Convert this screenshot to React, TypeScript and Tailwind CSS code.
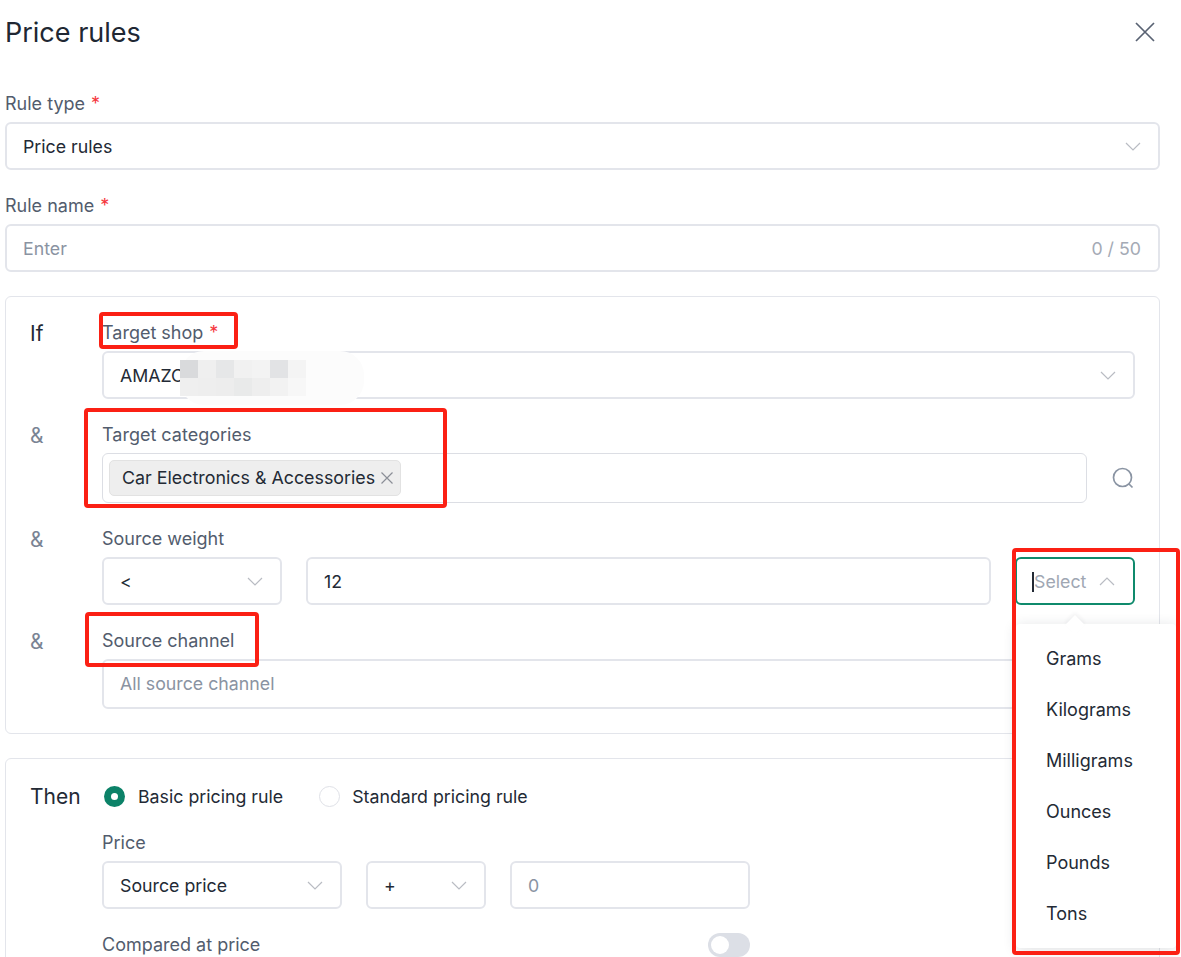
import type { ReactNode } from 'react'

const units = ['Grams', 'Kilograms', 'Milligrams', 'Ounces', 'Pounds', 'Tons']

const mosaic = [
  ['#d9dadc', '#efefef', '#e6e7e8', '#f1f1f1', '#f3f3f3', '#e2e3e5', '#f4f4f4'],
  ['#efefef', '#eeeeee', '#ededed', '#e9eaea', '#eeeeee', '#f2f2f2', '#f7f7f7'],
]

function Chevron({ up = false }: { up?: boolean }) {
  return (
    <svg width="16" height="9" viewBox="0 0 16 9" fill="none" stroke="#b9bcc3" strokeWidth="1.2" className="shrink-0">
      <polyline points={up ? '1,8 8,1 15,8' : '1,1 8,8 15,1'} />
    </svg>
  )
}

function Label({ children, required = false }: { children: ReactNode; required?: boolean }) {
  return (
    <div className="mb-[6px] h-6 text-[18px] leading-6 text-[#525c6d]">
      {children}
      {required && <span className="ml-[6px] text-[#f5363d]">*</span>}
    </div>
  )
}

function Box({ className = '', tone = 'text-[#232a35]', children }: { className?: string; tone?: string; children?: ReactNode }) {
  return (
    <div className={`flex h-12 items-center justify-between rounded-[6px] border-2 border-[#e3e5eb] bg-white pl-4 pr-[17px] text-[17.75px] ${tone} ${className}`}>
      {children}
    </div>
  )
}

function Value({ children }: { children: ReactNode }) {
  return <span className="mt-[2px]">{children}</span>
}

function RedBox({ className }: { className: string }) {
  return <div className={`absolute rounded-[4px] border-[4px] border-[#fb2014] ${className}`} />
}

export default function App() {
  return (
    <div className="relative h-[957px] w-[1181px] overflow-hidden bg-white pl-[5px] pr-[21px] font-[Inter,sans-serif]">
      {/* Header */}
      <div className="flex h-[92px] items-start justify-between">
        <h1 className="mt-[14px] text-[27px] leading-[38px] font-normal text-[#202733]">Price rules</h1>
        <svg width="22" height="22" viewBox="0 0 22 22" stroke="#596273" strokeWidth="1.7" className="mt-[21px] mr-[4px]">
          <path d="M2 2 L20 20 M20 2 L2 20" />
        </svg>
      </div>

      <Label required>Rule type</Label>
      <Box className="mb-6">
        <Value>Price rules</Value>
        <Chevron />
      </Box>

      <Label required>Rule name</Label>
      <Box className="mb-6" tone="text-[#8a93a2]">
        <Value>Enter</Value>
        <Value>
          <span className="text-[#a4aab5]">0 / 50</span>
        </Value>
      </Box>

      {/* If card */}
      <div className="mb-6 rounded-[6px] border border-[#e3e5eb] px-6 py-6">
        <div className="flex">
          <div className="mt-px w-[72px] shrink-0 text-[21px] leading-6 text-[#232a35]">If</div>
          <div className="min-w-0 flex-1">
            <Label required>Target shop</Label>
            <Box>
              <Value>AMAZON</Value>
              <Chevron />
            </Box>
          </div>
        </div>

        <div className="mt-6 flex">
          <div className="mt-px w-[72px] shrink-0 text-[21px] leading-6 text-[#7a8494]">&amp;</div>
          <div className="min-w-0 flex-1">
            <Label>Target categories</Label>
            <div className="flex items-center">
              <div className="flex h-[50px] flex-1 items-center rounded-[6px] border border-[#dcdee4] pl-[6px]">
                <div className="flex h-9 items-center gap-[5px] rounded-[5px] border border-[#e2e2e2] bg-[#eeeeee] pl-3 pr-[6px] text-[17.85px] text-[#232a35]">
                  Car Electronics &amp; Accessories
                  <svg width="14" height="14" viewBox="0 0 14 14" stroke="#8b8f97" strokeWidth="1.2">
                    <path d="M1.5 1.5 L12.5 12.5 M12.5 1.5 L1.5 12.5" />
                  </svg>
                </div>
              </div>
              <svg width="24" height="24" viewBox="0 0 24 24" fill="none" stroke="#8a94a3" strokeWidth="1.7" className="ml-6">
                <circle cx="11.5" cy="11.5" r="9" />
                <path d="M18 18 L21.5 21.5" />
              </svg>
            </div>
          </div>
        </div>

        <div className="mt-6 flex">
          <div className="mt-px w-[72px] shrink-0 text-[21px] leading-6 text-[#7a8494]">&amp;</div>
          <div className="min-w-0 flex-1">
            <Label>Source weight</Label>
            <div className="flex gap-6">
              <Box className="w-[180px]">
                <Value>&lt;</Value>
                <Chevron />
              </Box>
              <Box className="flex-1">
                <Value>12</Value>
              </Box>
              <div className="flex h-12 w-[120px] items-center justify-between rounded-[6px] border-2 border-[#0f8a6c] pl-[15px] pr-[18px] text-[17.75px] text-[#a0a7b3]">
                <span className="mt-[2px] border-l-2 border-[#232a35] leading-[20px]">Select</span>
                <Chevron up />
              </div>
            </div>
          </div>
        </div>

        <div className="mt-6 flex">
          <div className="mt-px w-[72px] shrink-0 text-[21px] leading-6 text-[#7a8494]">&amp;</div>
          <div className="min-w-0 flex-1">
            <Label>Source channel</Label>
            <Box className="h-[50px]" tone="text-[#8a93a2]">
              <span className="mt-px">All source channel</span>
            </Box>
          </div>
        </div>
      </div>

      {/* Then card */}
      <div className="rounded-t-[6px] border border-[#e3e5eb] px-6 pt-6 pb-10">
        <div className="flex">
          <div className="mt-px w-[72px] shrink-0 text-[21px] leading-[26px] text-[#232a35]">Then</div>
          <div className="min-w-0 flex-1">
            <div className="mb-[22px] flex h-[26px] items-center pl-[2px] text-[17.75px] text-[#232a35]">
              <div className="flex h-[21px] w-[21px] items-center justify-center rounded-full bg-[#0c8268]">
                <div className="h-[7px] w-[7px] rounded-full bg-white" />
              </div>
              <span className="ml-[13px] mt-[2px]">Basic pricing rule</span>
              <div className="ml-9 h-[21px] w-[21px] rounded-full border border-[#dfe1e7]" />
              <span className="ml-3 mt-[2px]">Standard pricing rule</span>
            </div>
            <Label>Price</Label>
            <div className="flex gap-6">
              <Box className="w-[240px]">
                <Value>Source price</Value>
                <Chevron />
              </Box>
              <Box className="w-[120px]">
                <Value>+</Value>
                <Chevron />
              </Box>
              <Box className="w-[240px]" tone="text-[#8a93a2]">
                <Value>0</Value>
              </Box>
            </div>
            <div className="mt-6 flex w-[648px] items-center justify-between">
              <span className="text-[18px] leading-6 text-[#525c6d]">Compared at price</span>
              <div className="flex h-6 w-[42px] items-center rounded-full bg-[#dcdfe6] pl-[3px]">
                <div className="h-[18px] w-[18px] rounded-full bg-white" />
              </div>
            </div>
          </div>
        </div>
      </div>

      {/* Redacted part of the shop name */}
      <svg width="190" height="58" viewBox="0 0 190 58" className="absolute left-[178px] top-[349px]">
        <rect x="2" y="2" width="184" height="54" rx="24" fill="#fcfcfc" />
        {mosaic.map((row, r) =>
          row.map((fill, c) => <rect key={`${r}-${c}`} x={2 + c * 18} y={11 + r * 18} width="18" height="18" fill={fill} />),
        )}
      </svg>

      {/* Unit dropdown */}
      <div className="absolute left-[1016px] top-[624px] h-[324px] w-[160px] rounded-[4px] bg-white pt-[9px] shadow-[0_2px_14px_rgba(30,40,60,0.14)]">
        <div className="absolute left-[52px] top-[-6px] h-[14px] w-[14px] rotate-45 bg-white shadow-[-2px_-2px_4px_rgba(30,40,60,0.05)]" />
        <div className="relative">
          {units.map(unit => (
            <div key={unit} className="flex h-[51px] items-center pl-[30px] text-[18px] text-[#232a35]">
              {unit}
            </div>
          ))}
        </div>
      </div>

      {/* Red annotations */}
      <RedBox className="left-[99px] top-[312px] h-[37px] w-[139px]" />
      <RedBox className="left-[84px] top-[408px] h-[100px] w-[363px]" />
      <RedBox className="left-[85px] top-[612px] h-[55px] w-[174px]" />
      <RedBox className="left-[1012px] top-[548px] h-[407px] w-[168px]" />
    </div>
  )
}
